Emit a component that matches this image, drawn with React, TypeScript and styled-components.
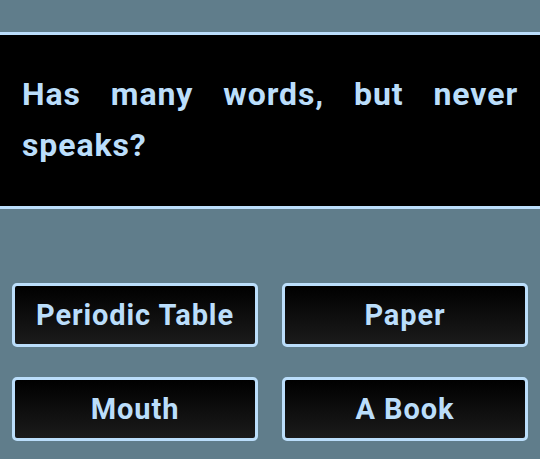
import React from "react";
import styled, { createGlobalStyle } from "styled-components";

const Global = createGlobalStyle`
  html, body { margin: 0; padding: 0; }
  body {
    background: #607d8b;
    font-family: Roboto, "Noto Sans", Arial, sans-serif;
    width: 540px;
    height: 459px;
    overflow: hidden;
  }
`;

const Page = styled.div`
  display: flex;
  flex-direction: column;
  padding-top: 32px;
`;

const QuestionPanel = styled.div`
  background: #000;
  border-top: 3px solid #bbdefb;
  border-bottom: 3px solid #bbdefb;
  padding: 34px 22px 35px;
`;

const QuestionText = styled.p`
  margin: 0;
  color: #bbdefb;
  font-size: 32px;
  font-weight: 700;
  letter-spacing: 0.9px;
  line-height: 51px;
  text-align: justify;
`;

const Answers = styled.div`
  display: grid;
  grid-template-columns: 246px 246px;
  column-gap: 24px;
  row-gap: 30px;
  padding: 74px 12px 0;
`;

const AnswerButton = styled.button`
  height: 64px;
  box-sizing: border-box;
  border: 3px solid #bbdefb;
  border-radius: 5px;
  background: linear-gradient(to bottom, #000 0%, #1b1b1b 100%);
  color: #bbdefb;
  font-family: Roboto, "Noto Sans", Arial, sans-serif;
  font-size: 29px;
  font-weight: 700;
  letter-spacing: 0.9px;
  display: flex;
  align-items: center;
  justify-content: center;
  padding: 0;
  cursor: pointer;
`;

const answers = ["Periodic Table", "Paper", "Mouth", "A Book"];

export default function App() {
  return (
    <>
      <Global />
      <Page>
        <QuestionPanel>
          <QuestionText>Has many words, but never speaks?</QuestionText>
        </QuestionPanel>
        <Answers>
          {answers.map((a) => (
            <AnswerButton key={a}>{a}</AnswerButton>
          ))}
        </Answers>
      </Page>
    </>
  );
}
